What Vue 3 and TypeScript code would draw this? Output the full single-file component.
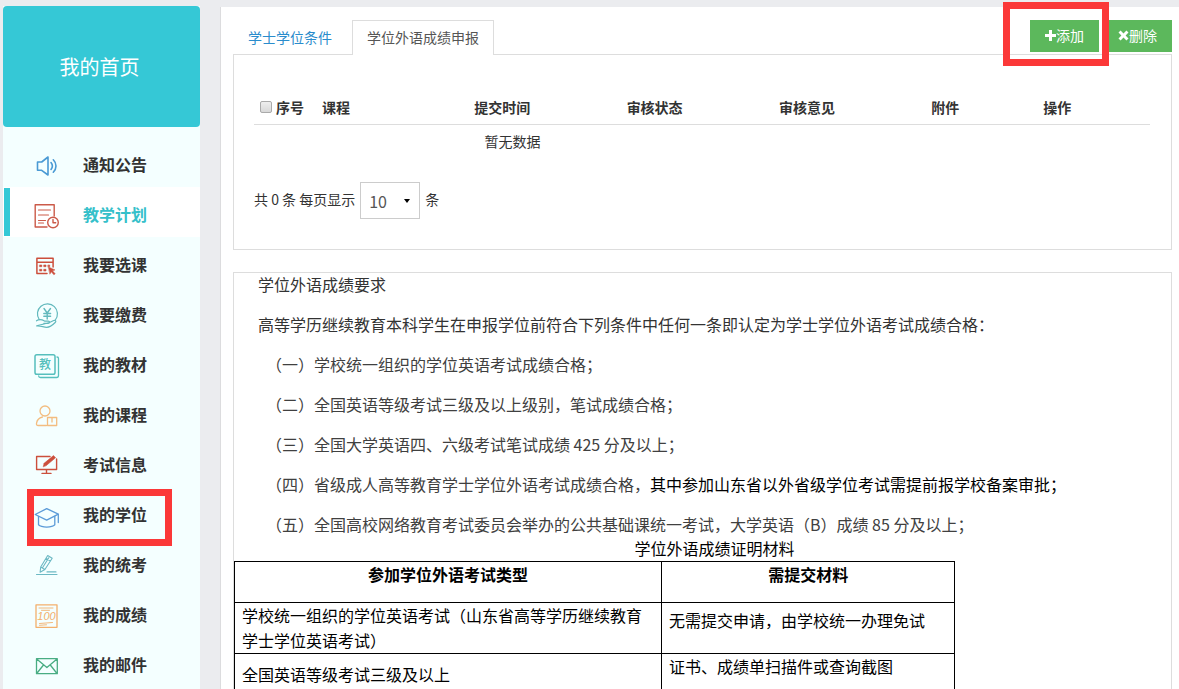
<script setup lang="ts">
import { ref } from 'vue'

interface NavItem {
  id: string
  label: string
  color: string
}

const navItems: NavItem[] = [
  { id: 'notice', label: '通知公告', color: '#4a9ad4' },
  { id: 'plan', label: '教学计划', color: '#cb5a49' },
  { id: 'choose', label: '我要选课', color: '#cc4f3c' },
  { id: 'fee', label: '我要缴费', color: '#62b9bd' },
  { id: 'book', label: '我的教材', color: '#56bfbd' },
  { id: 'course', label: '我的课程', color: '#f3bd80' },
  { id: 'exam', label: '考试信息', color: '#cc4f3c' },
  { id: 'degree', label: '我的学位', color: '#5b9bd8' },
  { id: 'unified', label: '我的统考', color: '#6cb9c4' },
  { id: 'score', label: '我的成绩', color: '#f3b06c' },
  { id: 'mail', label: '我的邮件', color: '#48ad83' },
]

const activeNav = ref('plan')
const markedNav = 'degree'
const pageSize = ref('10')
const allChecked = ref(false)
</script>

<template>
  <div class="page">
    <aside class="sidebar">
      <a class="home" href="#">我的首页</a>
      <nav class="nav">
        <a
          v-for="item in navItems"
          :key="item.id"
          href="#"
          class="nav-item"
          :class="{ active: item.id === activeNav }"
          @click.prevent="activeNav = item.id"
        >
          <svg class="nav-icon" viewBox="0 0 26 26" width="26" height="26" fill="none" :stroke="item.color" stroke-width="1.3" stroke-linejoin="round" stroke-linecap="round" aria-hidden="true">
            <g v-if="item.id === 'notice'" stroke-width="1.6">
              <path d="M3.500 9h4.200L14 4v18l-6.300-4.700H3.500z" />
              <path d="M17 9.500c1.600 2 1.600 5 0 7M19.300 6.800c3.600 3.600 3.600 8.600 0 12.400" />
            </g>
            <g v-else-if="item.id === 'plan'" stroke-width="1.400">
              <path d="M13 24H1.200V1.700h19V13" />
              <path d="M4.500 7h12M4.500 12h10M4.500 17.500h7M4.500 20h5" stroke-width="1.200" />
              <circle cx="19" cy="19.500" r="5.300" />
              <path d="M19 16.500v3.300h2.700" />
            </g>
            <g v-else-if="item.id === 'choose'" stroke-width="1.500">
              <path d="M13 20.500H2.900V5.200h16.200V14M3 9.200h16" />
              <path d="M5.800 12h2v1.700h-2zM10 12h2v1.700h-2zM14.200 12h1.500v1.700h-1.500zM5.800 16.300h2V18h-2zM10 16.300h2V18h-2z" :fill="item.color" stroke-width=".6" />
              <path d="M14.500 14l6.500 2.900-2.500.9 2.700 3-1.300 1-2.600-3-1.300 2.100z" :fill="item.color" stroke-width=".5" />
            </g>
            <g v-else-if="item.id === 'fee'" stroke-width="1.200">
              <path d="M5.200 16.500A10 10 0 1 1 21.300 17" />
              <path d="M10 5.500l3.200 4.500 3.300-4.500M13.200 10v6M9.800 10.500h6.800M9.800 13.200h6.800" stroke-width="1.400" />
              <path d="M2.500 17.800c3-2 5.800-1 8 .3h3.700c1.800 0 1.700 2.200 0 2.200H9.800M15.500 19.500l4.200-2c1.800-.7 2.800.8 1.500 2-3 3-5.600 4.800-8.500 4.800-3.600 0-5-1.700-10-1.400z" />
            </g>
            <g v-else-if="item.id === 'book'" stroke-width="1.500">
              <rect x="1" y="1.700" width="20" height="19.500" rx="1.800" />
              <path d="M23 4c1 0 1.500.6 1.500 1.600v17c0 1.200-.7 1.900-1.900 1.900H6.500c-1.200 0-1.800-.5-1.800-1.500" stroke-width="1.300" />
              <text class="book-mark" x="11" y="15.500" text-anchor="middle" :fill="item.color" stroke="none">教</text>
            </g>
            <g v-else-if="item.id === 'course'">
              <circle cx="11" cy="8" r="5" />
              <path d="M12.500 22.500H4.300c-1.600 0-2-.8-1.800-2.200.5-3.500 3-5.600 6-6.300" />
              <path d="M13.500 14.500h9.200v8h-9.200zM18 14.800v4.200" />
            </g>
            <g v-else-if="item.id === 'exam'" stroke-width="1.400">
              <path d="M16 3.500H2.600v13h20V6M12.500 16.500v3.700M8 20.400h9" />
              <path d="M9.300 13.500l.8-3.200L19.500 2.600l2 2.200-9.200 7.700z" :fill="item.color" stroke-width=".6" />
            </g>
            <g v-else-if="item.id === 'degree'">
              <path d="M1.200 11.500L12.700 5.600l11.600 5.500-11.600 6z" />
              <path d="M4.500 13.500v8.300c3 3 13.500 3 16.300 0v-8.500M24.300 11.500v8" />
            </g>
            <g v-else-if="item.id === 'unified'" stroke-width="1.100">
              <path d="M6.700 14L13.700 2.500l4.500 2.700-7.300 11.300-4.800 2.700zM6.700 14l4.200 2.500M12 5.300l4.500 2.700M8.800 14.200l6-9.500" />
              <path d="M2.500 21.500h20.500M13 18.900h9" />
            </g>
            <g v-else-if="item.id === 'score'">
              <rect x="2" y="1.800" width="21" height="22.500" />
              <path d="M5 5h14M7.500 7.300h8M5.500 20.500l13-1M5.500 22.300l7-.5" stroke-width=".9" />
              <text class="score-mark" x="12.500" y="17" text-anchor="middle" :fill="item.color" stroke="none">100</text>
            </g>
            <g v-else>
              <path d="M2.500 5.700h20.800v15H2.500zM2.700 6l10.200 8.500L23 6M2.700 20.500L9.500 12M23 20.500L16.300 12" />
            </g>
          </svg>
          <span class="nav-label">{{ item.label }}</span>
          <span v-if="item.id === markedNav" class="marker nav-marker"></span>
        </a>
      </nav>
    </aside>

    <main class="content">
      <header class="toolbar">
        <div class="tabs">
          <a class="tab" href="#">学士学位条件</a>
          <a class="tab current" href="#">学位外语成绩申报</a>
        </div>
        <div class="actions">
          <button type="button" class="btn">
            <svg viewBox="0 0 11 11" width="11" height="11" aria-hidden="true"><path d="M4 0h3v4h4v3H7v4H4V7H0V4h4z" fill="#fff" /></svg>添加
            <span class="marker add-marker"></span>
          </button>
          <button type="button" class="btn">
            <svg viewBox="0 0 11 11" width="11" height="11" aria-hidden="true"><path d="M2.600.5l2.900 2.900L8.400.5l2.100 2.100-2.900 2.900 2.900 2.900-2.100 2.100-2.900-2.900-2.900 2.900L.5 8.400l2.900-2.900L.5 2.600z" fill="#fff" /></svg>删除
          </button>
        </div>
      </header>

      <section class="panel records">
        <table class="grid">
          <colgroup>
            <col class="c-index" /><col class="c-wide" /><col class="c-wide" /><col class="c-wide" /><col class="c-wide" /><col class="c-file" /><col />
          </colgroup>
          <thead>
            <tr>
              <th class="first">
                <label class="check"><input v-model="allChecked" type="checkbox" />序号</label>
              </th>
              <th>课程</th>
              <th>提交时间</th>
              <th>审核状态</th>
              <th>审核意见</th>
              <th>附件</th>
              <th>操作</th>
            </tr>
          </thead>
          <tbody>
            <tr>
              <td colspan="4" class="empty">暂无数据</td>
              <td colspan="3"></td>
            </tr>
          </tbody>
        </table>
        <div class="pager">
          <label class="pager-text" for="page-size">共 0 条 每页显示</label>
          <span class="select-box">
            <select id="page-size" v-model="pageSize">
              <option>10</option>
              <option>20</option>
              <option>50</option>
            </select>
            <svg class="caret" viewBox="0 0 6 4" width="6" height="4" aria-hidden="true"><path d="M0 0h6L3 4z" fill="#000" /></svg>
          </span>
          <span class="pager-text">条</span>
        </div>
      </section>

      <section class="panel rules">
        <div class="rules-text">
          <p>学位外语成绩要求</p>
          <p>高等学历继续教育本科学生在申报学位前符合下列条件中任何一条即认定为学士学位外语考试成绩合格：</p>
          <p class="clause">（一）学校统一组织的学位英语考试成绩合格；</p>
          <p class="clause">（二）全国英语等级考试三级及以上级别，笔试成绩合格；</p>
          <p class="clause">（三）全国大学英语四、六级考试笔试成绩 425 分及以上；</p>
          <p class="clause">（四）省级成人高等教育学士学位外语考试成绩合格，<span class="strong">其中参加山东省以外省级学位考试需提前报学校备案审批；</span></p>
          <p class="clause">（五）全国高校网络教育考试委员会举办的公共基础课统一考试，大学英语（B）成绩 85 分及以上；</p>
          <p id="proof-title" class="proof-title">学位外语成绩证明材料</p>
        </div>
        <table class="proof" aria-labelledby="proof-title">
          <thead>
            <tr>
              <th class="c-type">参加学位外语考试类型</th>
              <th class="c-material">需提交材料</th>
            </tr>
          </thead>
          <tbody>
            <tr>
              <td>学校统一组织的学位英语考试（山东省高等学历继续教育学士学位英语考试）</td>
              <td class="raised">无需提交申请，由学校统一办理免试</td>
            </tr>
            <tr>
              <td>全国英语等级考试三级及以上</td>
              <td class="top">证书、成绩单扫描件或查询截图</td>
            </tr>
          </tbody>
        </table>
      </section>
    </main>
  </div>
</template>

<style>
html {
  scrollbar-width: none;
  background: #ebecef;
}
</style>

<style scoped>
.page {
  display: flex;
  gap: 20px;
  box-sizing: border-box;
  height: 100vh;
  padding: 6px 0 0 3px;
  overflow: hidden;
  background: #ebecef;
  color: #333;
  font-family: "Noto Sans CJK SC", sans-serif;
  font-size: 14px;
  line-height: 20px;
}
a {
  text-decoration: none;
}
.sidebar {
  flex: 0 0 197px;
  background: #f4ffff;
}
.home {
  display: flex;
  align-items: center;
  justify-content: center;
  height: 121px;
  padding-right: 4px;
  box-sizing: border-box;
  border-radius: 4px;
  background: #35c8d6;
  color: #fff;
  font-size: 20px;
  font-weight: 400;
}
.nav {
  padding-top: 10px;
}
.nav-item {
  position: relative;
  display: flex;
  align-items: center;
  gap: 23px;
  box-sizing: border-box;
  height: 50px;
  padding: 7px 0 0 31px;
  color: #333;
  font-size: 16px;
  font-weight: 700;
}
.nav-item.active {
  background: #fff;
  color: #35c0ca;
}
.nav-item.active::before {
  content: "";
  position: absolute;
  top: 1px;
  bottom: 1px;
  left: 1px;
  width: 6px;
  background: #35c8d6;
}
.nav-icon {
  flex: none;
}
.nav-label {
  padding-bottom: 4px;
}
.book-mark {
  font-size: 12px;
  font-weight: 500;
}
.score-mark {
  font-family: "Liberation Sans", sans-serif;
  font-size: 11px;
  font-style: italic;
  font-weight: 400;
}
.marker {
  position: absolute;
  box-sizing: border-box;
  border: 7px solid #fb3838;
  pointer-events: none;
}
.nav-marker {
  top: 2px;
  left: 24px;
  width: 145px;
  height: 57px;
  z-index: 1;
}
.content {
  flex: 1;
  min-width: 0;
  margin-top: 1px;
  padding: 13px 7px 0 12px;
  border-left: 1px solid #dcdcde;
  background: #fff;
}
.toolbar {
  display: flex;
  justify-content: space-between;
  align-items: flex-start;
}
.tabs {
  display: flex;
  gap: 5px;
  margin-bottom: -1px;
}
.tab {
  position: relative;
  padding: 6px 14px 8px;
  border: 1px solid transparent;
  border-bottom: 0;
  color: #2a8ccc;
}
.tab.current {
  border-color: #ddd;
  background: #fff;
  color: #555;
}
.actions {
  display: flex;
  gap: 4px;
}
.btn {
  position: relative;
  display: flex;
  align-items: center;
  height: 32px;
  padding: 0 15px 2px;
  border: 0;
  background: #5cb85c;
  color: #fff;
  font: inherit;
}
.add-marker {
  top: -18px;
  right: -10px;
  width: 106px;
  height: 64px;
  z-index: 1;
}
.panel {
  border: 1px solid #ddd;
}
.records {
  padding: 36px 21px 30px 20px;
}
.grid {
  width: 100%;
  table-layout: fixed;
  border-collapse: collapse;
}
.c-index {
  width: 60px;
}
.c-wide {
  width: 17%;
}
.c-file {
  width: 112px;
}
.grid th,
.grid td {
  padding: 6px 0 6px 8px;
  text-align: left;
}
.grid th {
  padding-bottom: 7px;
  border-bottom: 1px solid #ddd;
  font-weight: 700;
}
.grid th.first {
  padding-left: 6px;
}
.grid td.empty {
  padding-left: 0;
  text-align: center;
}
.check {
  display: flex;
  align-items: center;
  gap: 4px;
  white-space: nowrap;
}
.check input {
  appearance: none;
  width: 12px;
  height: 12px;
  margin: 0;
  border: 1px solid #aaa;
  border-radius: 2px;
  background: linear-gradient(#eee, #d8d8d8);
}
.check input:checked {
  background: #35c8d6;
}
.pager {
  display: flex;
  align-items: center;
  gap: 5px;
  margin-top: 25px;
}
.pager-text {
  padding-bottom: 4px;
}
.select-box {
  position: relative;
}
.select-box select {
  display: block;
  appearance: none;
  box-sizing: border-box;
  width: 60px;
  height: 37px;
  padding: 0 8px;
  border: 1px solid #ccc;
  border-radius: 0;
  background: #fff;
  color: #555;
  font: inherit;
  font-size: 16px;
}
.caret {
  position: absolute;
  top: 17px;
  right: 10px;
  pointer-events: none;
}
.rules {
  margin-top: 22px;
  font-size: 16px;
  line-height: 22px;
}
.rules-text {
  padding-left: 24px;
}
.rules-text p {
  margin: 0 0 18px;
}
.rules-text .clause {
  padding-left: 8px;
  color: #404040;
}
.rules-text .clause:nth-last-child(2) {
  margin-bottom: 2px;
}
.rules-text .strong {
  color: #000;
}
.rules-text .proof-title {
  margin: 0 0 2px;
  color: #000;
  text-align: center;
}
.proof {
  width: 77%;
  table-layout: fixed;
  border-collapse: collapse;
  color: #000;
  line-height: 25px;
}
.proof th,
.proof td {
  height: 40px;
  padding: 0 7px;
  border: 1px solid #000;
  text-align: left;
}
.proof th {
  text-align: center;
  vertical-align: top;
  font-weight: 700;
}
.c-type {
  width: 412px;
}
.proof td.raised {
  height: 34px;
  padding-bottom: 16px;
}
.proof td.top {
  vertical-align: top;
}
</style>
